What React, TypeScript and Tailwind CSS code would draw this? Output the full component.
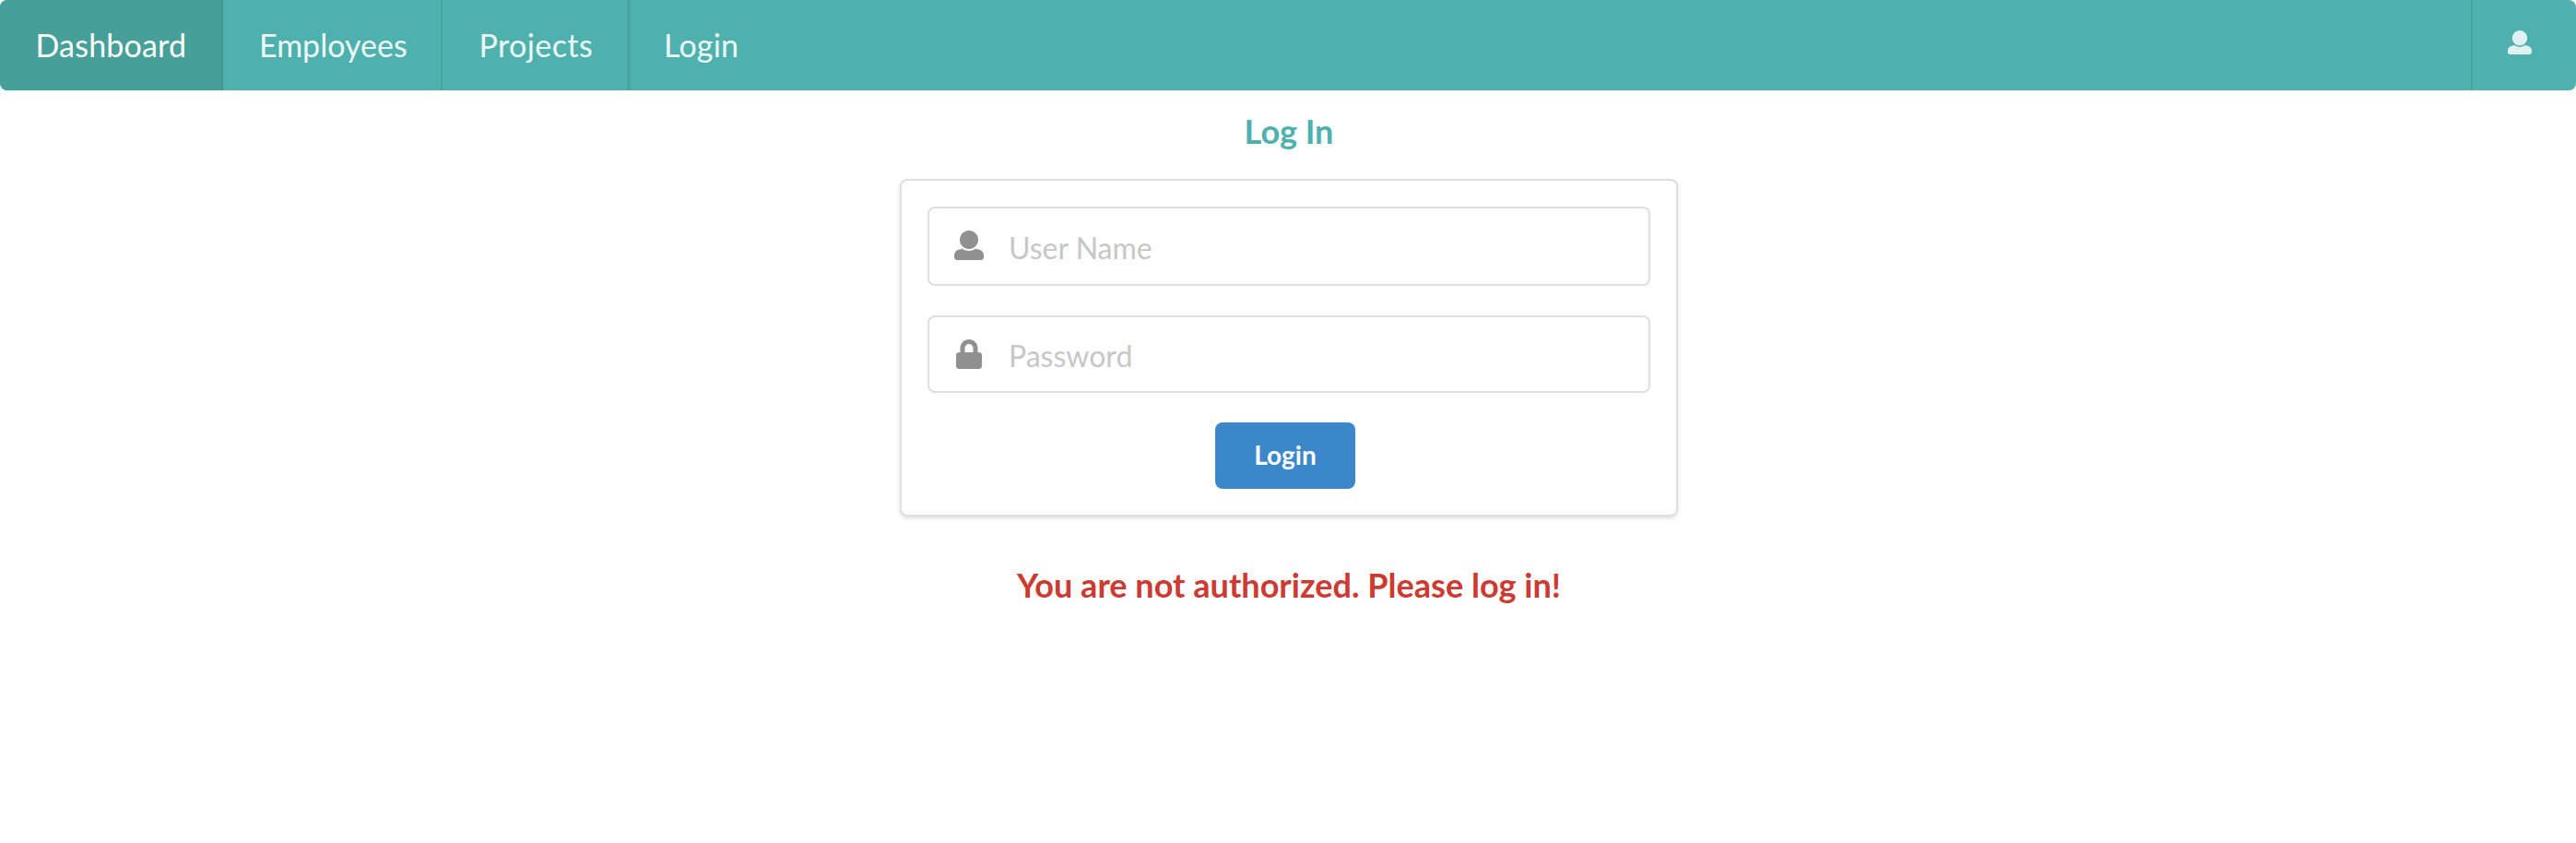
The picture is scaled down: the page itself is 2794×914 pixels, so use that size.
import React from "react";

function UserIcon({ className }: { className: string }) {
  return (
    <svg viewBox="0 0 512 512" fill="currentColor" className={className} aria-hidden="true">
      <path d="M256 0c88.366 0 160 71.634 160 160s-71.634 160-160 160S96 248.366 96 160 167.634 0 256 0zm183.283 333.821l-71.313-17.828c-74.923 53.89-165.738 41.864-223.94 0l-71.313 17.828C29.981 344.505 0 382.903 0 426.955V464c0 26.51 21.49 48 48 48h416c26.51 0 48-21.49 48-48v-37.045c0-44.052-29.981-82.45-72.717-93.134z" />
    </svg>
  );
}

function LockIcon({ className }: { className: string }) {
  return (
    <svg viewBox="0 0 448 512" fill="currentColor" className={className} aria-hidden="true">
      <path d="M400 224h-24v-72C376 68.2 307.8 0 224 0S72 68.2 72 152v72H48c-26.5 0-48 21.5-48 48v192c0 26.5 21.5 48 48 48h352c26.5 0 48-21.5 48-48V272c0-26.5-21.5-48-48-48zm-104 0H152v-72c0-39.7 32.3-72 72-72s72 32.3 72 72v72z" />
    </svg>
  );
}

function NavBar() {
  return (
    <nav className="flex h-[98px] overflow-hidden rounded-lg bg-[#4fb1ad] text-[34px] leading-[34px] text-white/90">
      <a className="flex w-[242px] items-center border-r-2 border-[#45958f] bg-[#469f99] pl-[38.5px] tracking-[0.2px] text-white">Dashboard</a>
      <a className="flex w-[238px] items-center border-r-2 border-[#48a49e] pl-[39px]">Employees</a>
      <a className="flex w-[204px] items-center border-r-4 border-[#48a49e] pl-[39.5px] tracking-[0.4px]">Projects</a>
      <a className="flex items-center pl-[36px] tracking-[0.2px]">Login</a>
      <a className="ml-auto flex w-[114px] border-l-2 border-[#48a49e] pt-[33.4px] pl-[38px] text-[#dff1f0]">
        <UserIcon className="size-[26px]" />
      </a>
    </nav>
  );
}

export default function App() {
  return (
    <div className="min-h-[914px] bg-white font-['Lato',sans-serif]">
      <NavBar />
      <main className="mx-auto flex w-[844px] translate-x-[1px] flex-col items-center">
        <h2 className="mt-[21px] h-[46px] text-[36px] leading-[46px] font-bold text-[#4fb1ad]">Log In</h2>
        <form className="mt-[29px] flex h-[366px] w-full flex-col rounded-lg border-2 border-[#dededf] px-7 pt-7 shadow-[0_2px_4px_0_rgba(34,36,38,0.15)]">
          <label className="flex h-[86px] items-center rounded-lg border-2 border-[#dededf] pl-[26.7px]">
            <UserIcon className="mb-0.5 size-8 shrink-0 text-[#909090]" />
            <input
              placeholder="User Name"
              className="ml-[27.3px] h-10 min-w-0 flex-1 pt-0.5 text-[32px] leading-[38px] outline-none placeholder:text-[#c7c7c7]"
            />
          </label>
          <label className="mt-8 flex h-[84px] items-center rounded-lg border-2 border-[#dededf] pl-[28.7px]">
            <LockIcon className="h-8 w-7 shrink-0 text-[#909090]" />
            <input
              type="password"
              placeholder="Password"
              className="ml-[29.3px] h-10 min-w-0 flex-1 pt-0.5 text-[32px] leading-[38px] outline-none placeholder:text-[#c7c7c7]"
            />
          </label>
          <button
            type="button"
            className="mt-8 mr-2 h-[72px] w-[152px] self-center rounded-lg bg-[#3c86ca] pb-0.5 text-[28px] leading-7 font-bold text-white"
          >
            Login
          </button>
        </form>
        <h2 className="mt-[51px] text-[36px] leading-[46px] font-bold tracking-[0.03px] text-[#cb3a33]">
          You are not authorized. Please log in!
        </h2>
      </main>
    </div>
  );
}
